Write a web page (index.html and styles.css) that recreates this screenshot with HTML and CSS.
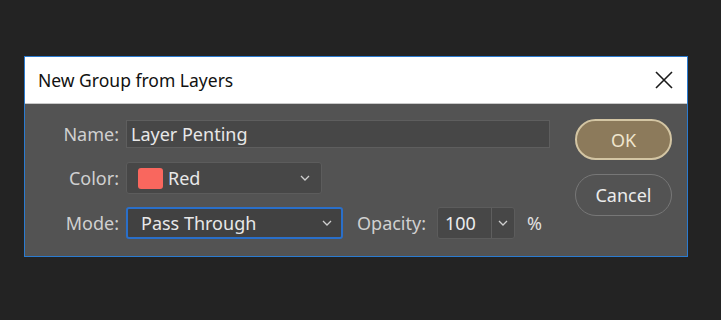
FILE: index.html
```html
<!DOCTYPE html>
<html lang="en">
<head>
    <meta charset="UTF-8">
    <meta name="viewport" content="width=device-width, initial-scale=1.0">
    <title>New Group from Layers</title>
    <link rel="stylesheet" href="styles.css">
</head>
<body>
    <div class="dialog">
        <div class="titlebar">
            <span class="title">New Group from Layers</span>
            <svg class="close" width="18" height="18" viewBox="0 0 18 18">
                <path d="M1 1 L17 17 M17 1 L1 17" stroke="#1a1a1a" stroke-width="1.6" fill="none"/>
            </svg>
        </div>
        <div class="content">
            <div class="form">
                <div class="row row-name">
                    <label class="label">Name:</label>
                    <div class="field name-field">Layer Penting</div>
                </div>
                <div class="row row-color">
                    <label class="label">Color:</label>
                    <div class="field select color-select">
                        <span class="swatch"></span>
                        <span class="value">Red</span>
                        <svg class="chev" width="10" height="6" viewBox="0 0 10 6"><path d="M1 1 L5 5 L9 1" stroke="#cfcfcf" stroke-width="1.3" fill="none"/></svg>
                    </div>
                </div>
                <div class="row row-mode">
                    <label class="label">Mode:</label>
                    <div class="field select mode-select">
                        <span class="value">Pass Through</span>
                        <svg class="chev" width="10" height="6" viewBox="0 0 10 6"><path d="M1 1 L5 5 L9 1" stroke="#cfcfcf" stroke-width="1.3" fill="none"/></svg>
                    </div>
                    <label class="label-opacity">Opacity:</label>
                    <div class="opacity">
                        <span class="opacity-value">100</span>
                        <span class="opacity-drop">
                            <svg width="10" height="6" viewBox="0 0 10 6"><path d="M1 1 L5 5 L9 1" stroke="#cfcfcf" stroke-width="1.3" fill="none"/></svg>
                        </span>
                    </div>
                    <span class="percent">%</span>
                </div>
            </div>
            <div class="buttons">
                <button class="btn btn-ok">OK</button>
                <button class="btn btn-cancel">Cancel</button>
            </div>
        </div>
    </div>
</body>
</html>
```

FILE: styles.css
```css
body {
    margin: 0;
    padding: 56px 0 0 24px;
    background-color: #232323;
    font-family: "Noto Sans", "Open Sans", sans-serif;
    height: 320px;
    box-sizing: border-box;
    overflow: hidden;
}
.dialog {
    width: 664px;
    height: 201px;
    box-sizing: border-box;
    border: 1px solid #2b7bd0;
    background-color: #535353;
}
.titlebar {
    height: 47px;
    background-color: #ffffff;
    border-bottom: 1px solid #c9c9c9;
    box-sizing: border-box;
    display: flex;
    align-items: center;
    padding: 0 14px 0 13px;
}
.title {
    font-size: 17.5px;
    color: #111;
}
.close {
    margin-left: auto;
}
.content {
    display: flex;
    padding: 16px 15px 0 0;
}
.form {
    flex: 1;
}
.row {
    display: flex;
    align-items: center;
}
.label {
    width: 94px;
    text-align: right;
    margin-right: 7px;
    color: #d0d0d0;
    font-size: 18px;
}
.field {
    box-sizing: border-box;
    color: #e8e8e8;
    font-size: 18px;
    display: flex;
    align-items: center;
}
.name-field {
    width: 424px;
    height: 28px;
    background-color: #474747;
    border: 1px solid #5e5e5e;
    padding-left: 4px;
}
.row-color {
    margin-top: 14px;
}
.select {
    height: 32px;
    border-radius: 3px;
}
.color-select {
    width: 196px;
    background-color: #474747;
    border: 1px solid #5c5c5c;
    padding: 0 11px 0 11px;
}
.swatch {
    width: 25px;
    height: 21px;
    border-radius: 3px;
    background-color: #f9675e;
    margin-right: 5px;
}
.chev {
    margin-left: auto;
}
.row-mode {
    margin-top: 13px;
}
.mode-select {
    width: 217px;
    background-color: #414141;
    border: 2px solid #2a6fc9;
    padding: 0 9px 0 13px;
}
.label-opacity {
    width: 72px;
    margin-left: 14px;
    margin-right: 8px;
    color: #d0d0d0;
    font-size: 18px;
    white-space: nowrap;
}
.opacity {
    width: 78px;
    height: 32px;
    box-sizing: border-box;
    display: flex;
    background-color: #474747;
    border: 1px solid #5c5c5c;
    border-radius: 3px;
    color: #ececec;
    font-size: 18px;
}
.opacity-value {
    width: 54px;
    box-sizing: border-box;
    padding-left: 7px;
    display: flex;
    align-items: center;
    border-right: 1px solid #5e5e5e;
}
.opacity-drop {
    flex: 1;
    display: flex;
    align-items: center;
    justify-content: center;
}
.percent {
    margin-left: 12px;
    color: #e0e0e0;
    font-size: 18px;
}
.buttons {
    width: 97px;
    display: flex;
    flex-direction: column;
    gap: 14px;
    margin-top: -1px;
}
.btn {
    font-family: inherit;
    font-size: 18px;
    border-radius: 21px;
    box-sizing: border-box;
    height: 42px;
    width: 97px;
    padding: 0;
}
.btn-ok {
    background-color: #8c7a5b;
    border: 2px solid #d3c5a3;
    color: #efe5cd;
    height: 41px;
}
.btn-cancel {
    background-color: transparent;
    border: 1.5px solid #777;
    color: #ececec;
}
```
